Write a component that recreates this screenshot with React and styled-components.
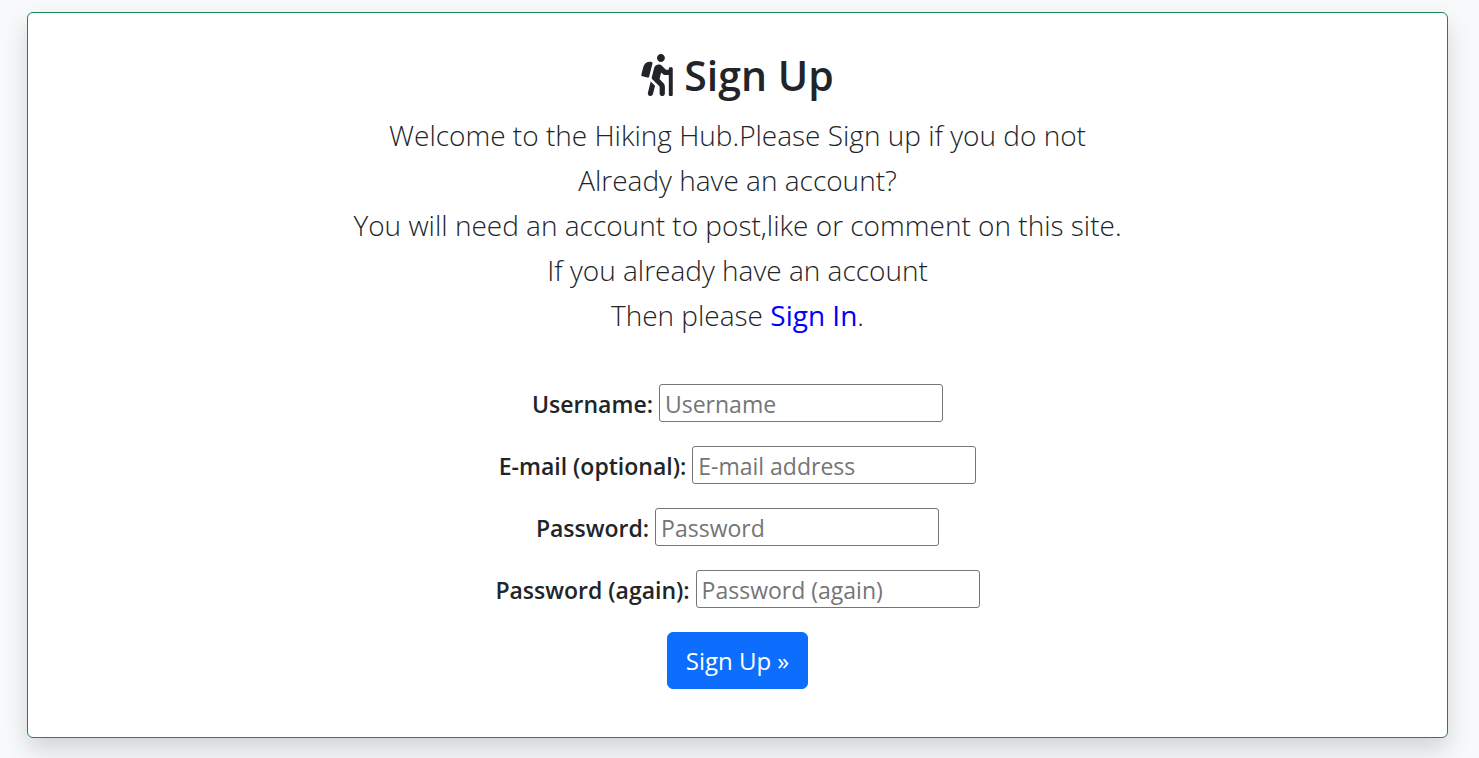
import React from "react";
import styled, { createGlobalStyle } from "styled-components";
import { FaHiking } from "react-icons/fa";

const GlobalStyle = createGlobalStyle`
  *, *::before, *::after { box-sizing: border-box; }
  body {
    margin: 0;
    background: #f8f9fa;
    color: #212529;
    font-family: "Open Sans", "Noto Sans", sans-serif;
    font-size: 23px;
    line-height: 36px;
  }
`;

const Page = styled.main`
  padding: 12px 31px 20px 27px;
`;

const Card = styled.section`
  display: flex;
  flex-direction: column;
  align-items: center;
  padding: 37px 24px 48px;
  background: #fff;
  border: 1px solid #198754;
  border-radius: 6px;
  box-shadow: 0 12px 24px rgba(0, 0, 0, 0.15);
  text-align: center;
`;

const Title = styled.h1`
  display: flex;
  align-items: center;
  gap: 11px;
  margin: 0 0 13px;
  font-size: 41px;
  font-weight: 600;
  line-height: 50px;
`;

const HikerIcon = styled(FaHiking)`
  width: 32px;
  height: 42px;
`;

const Lead = styled.p`
  margin: 0 0 46px;
  font-size: 28px;
  font-weight: 300;
  line-height: 45px;
`;

const SignInLink = styled.a`
  color: #0000ff;
  font-weight: 400;
  text-decoration: none;
`;

const Form = styled.form`
  display: flex;
  flex-direction: column;
  align-items: center;
  gap: 24px;
`;

const Field = styled.div`
  display: flex;
  align-items: baseline;
  gap: 6px;
`;

const Label = styled.label`
  font-weight: 600;
`;

const Input = styled.input`
  width: 284px;
  height: 38px;
  padding: 2px 5px 0;
  border: 1px solid #767676;
  border-radius: 3px;
  background: #fff;
  font: inherit;
  &::placeholder { color: #757575; opacity: 1; }
`;

const Submit = styled.button`
  height: 57px;
  padding: 0 18px;
  border: 1px solid #0d6efd;
  border-radius: 6px;
  background: #0d6efd;
  color: #fff;
  font: inherit;
  font-size: 24px;
`;

const fields = [
  { id: "username", label: "Username:", placeholder: "Username", type: "text" },
  { id: "email", label: "E-mail (optional):", placeholder: "E-mail address", type: "email" },
  { id: "password1", label: "Password:", placeholder: "Password", type: "password" },
  { id: "password2", label: "Password (again):", placeholder: "Password (again)", type: "password" },
];

export default function App() {
  return (
    <>
      <GlobalStyle />
      <Page>
        <Card>
          <Title><HikerIcon aria-hidden="true" />Sign Up</Title>
          <Lead>
            Welcome to the Hiking Hub.Please Sign up if you do not<br />
            Already have an account?<br />
            You will need an account to post,like or comment on this site.<br />
            If you already have an account<br />
            Then please <SignInLink href="#signin">Sign In</SignInLink>.
          </Lead>
          <Form>
            {fields.map(({ id, label, placeholder, type }) => (
              <Field key={id}>
                <Label htmlFor={id}>{label}</Label>
                <Input id={id} name={id} type={type} placeholder={placeholder} />
              </Field>
            ))}
            <Submit type="submit">Sign Up »</Submit>
          </Form>
        </Card>
      </Page>
    </>
  );
}
